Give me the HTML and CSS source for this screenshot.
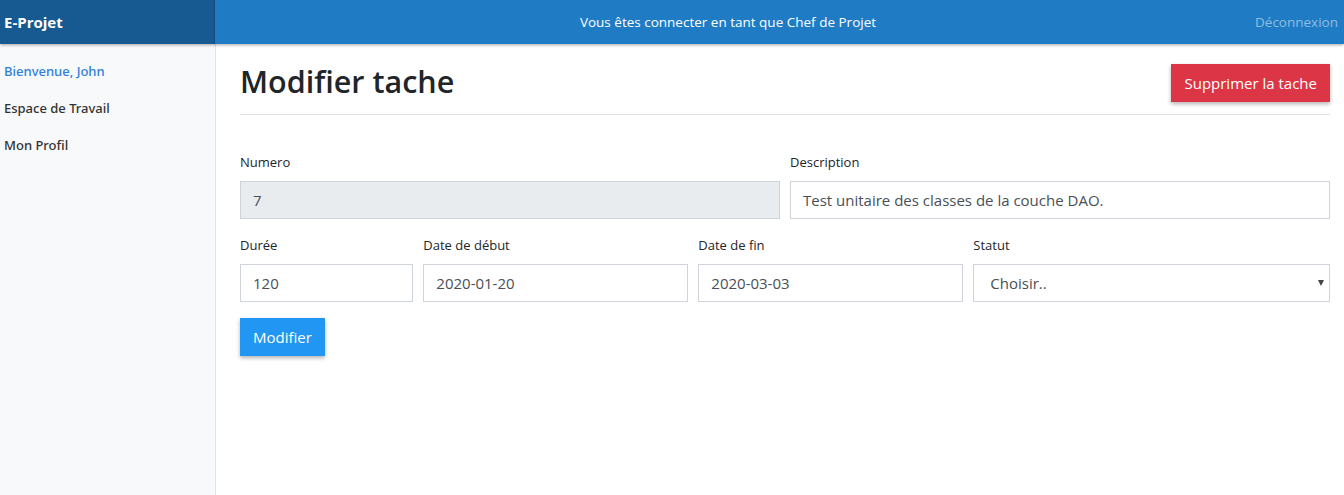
FILE: index.html
```html
<!DOCTYPE html>
<html lang="fr">
<head>
<meta charset="utf-8">
<title>E-Projet</title>
<link rel="stylesheet" href="styles.css">
</head>
<body>
<header class="navbar">
  <a class="brand">E-Projet</a>
  <span class="nav-status">Vous êtes connecter en tant que Chef de Projet</span>
  <a class="nav-logout">Déconnexion</a>
</header>
<div class="layout">
  <nav class="sidebar">
    <a class="side-link active">Bienvenue, John</a>
    <a class="side-link">Espace de Travail</a>
    <a class="side-link">Mon Profil</a>
  </nav>
  <main class="main">
    <div class="page-head">
      <h2 class="page-title">Modifier tache</h2>
      <button class="btn btn-danger">Supprimer la tache</button>
    </div>
    <form class="form">
      <div class="form-row">
        <div class="col col-6">
          <label class="label">Numero</label>
          <input class="input" type="text" value="7" readonly>
        </div>
        <div class="col col-6">
          <label class="label">Description</label>
          <input class="input" type="text" value="Test unitaire des classes de la couche DAO.">
        </div>
      </div>
      <div class="form-row">
        <div class="col col-2">
          <label class="label">Durée</label>
          <input class="input" type="text" value="120">
        </div>
        <div class="col col-3">
          <label class="label">Date de début</label>
          <input class="input" type="text" value="2020-01-20">
        </div>
        <div class="col col-3">
          <label class="label">Date de fin</label>
          <input class="input" type="text" value="2020-03-03">
        </div>
        <div class="col col-4">
          <label class="label">Statut</label>
          <div class="select-wrap">
            <select class="input select">
              <option>Choisir..</option>
            </select>
          </div>
        </div>
      </div>
      <button type="button" class="btn btn-primary">Modifier</button>
    </form>
  </main>
</div>
</body>
</html>
```

FILE: styles.css
```css
* { box-sizing: border-box; }
html, body { margin: 0; height: 100%; }
body {
  font-family: "Open Sans", "Noto Sans", "Liberation Sans", sans-serif;
  font-size: 16px;
  color: #212529;
  background: #fff;
  overflow: hidden;
}

.navbar {
  position: relative;
  z-index: 2;
  display: flex;
  align-items: center;
  height: 44px;
  background: #1e7bc4;
  box-shadow: 0 1px 3px rgba(0,0,0,.35);
}
.brand {
  width: 215px;
  height: 100%;
  display: flex;
  align-items: center;
  padding-left: 4px;
  background: #165a91;
  color: #fff;
  font-weight: 700;
  font-size: 15px;
  box-shadow: inset -1px 0 0 rgba(0,0,0,.15);
}
.nav-status {
  flex: 1;
  text-align: center;
  color: #fff;
  font-size: 13.5px;
}
.nav-logout {
  width: 103px;
  text-align: right;
  padding-right: 6px;
  color: rgba(255,255,255,.5);
  font-size: 13.5px;
}

.layout {
  display: flex;
  height: calc(100% - 44px);
}
.sidebar {
  width: 216px;
  flex: 0 0 216px;
  background: #f8f9fa;
  border-right: 1px solid #e2e3e5;
  padding-top: 9px;
  display: flex;
  flex-direction: column;
}
.side-link {
  display: block;
  padding: 8px 4px;
  font-family: "Noto Sans", "Open Sans", sans-serif;
  font-size: 13px;
  line-height: 21px;
  font-weight: 500;
  color: #333;
}
.side-link.active { color: #2f7fd8; }

.main {
  flex: 1;
  padding: 20px 14px 0 24px;
}
.page-head {
  display: flex;
  justify-content: space-between;
  align-items: center;
  padding-bottom: 12px;
  border-bottom: 1px solid #dee2e6;
  margin-bottom: 37px;
}
.page-title {
  align-self: flex-start;
  margin: 0;
  font-size: 30.5px;
  line-height: 34px;
  font-weight: 600;
  color: #212529;
}
.btn {
  font-family: inherit;
  font-size: 15px;
  line-height: 24px;
  padding: 6px 12px;
  border: 1px solid transparent;
  border-radius: 0;
  color: #fff;
  box-shadow: 0 2px 4px rgba(0,0,0,.3);
  cursor: pointer;
}
.btn-danger { background: #dc3545; border-color: #dc3545; }
.btn-primary { background: #2196f3; border-color: #2196f3; }

.form-row {
  display: flex;
  margin: 0 -5px;
}
.col {
  padding: 0 5px;
  margin-bottom: 16px;
}
.col-6 { flex: 0 0 50%; }
.col-2 { flex: 0 0 16.6667%; }
.col-3 { flex: 0 0 25%; }
.col-4 { flex: 0 0 33.3333%; }

.label {
  display: block;
  font-size: 13px;
  line-height: 21px;
  margin-bottom: 8px;
  color: #212529;
}
.input {
  display: block;
  width: 100%;
  height: 38px;
  padding: 6px 12px;
  font-family: inherit;
  font-size: 15px;
  line-height: 24px;
  color: #495057;
  background: #fff;
  border: 1px solid #ced4da;
  border-radius: 0;
  outline: none;
}
.input[readonly] { background: #e9ecef; }
.select-wrap { position: relative; }
.select {
  -webkit-appearance: none;
  appearance: none;
  padding-left: 16px;
}
.select-wrap::after {
  content: "";
  position: absolute;
  right: 6px;
  top: 16px;
  border-left: 3.5px solid transparent;
  border-right: 3.5px solid transparent;
  border-top: 6px solid #444;
  pointer-events: none;
}
```
